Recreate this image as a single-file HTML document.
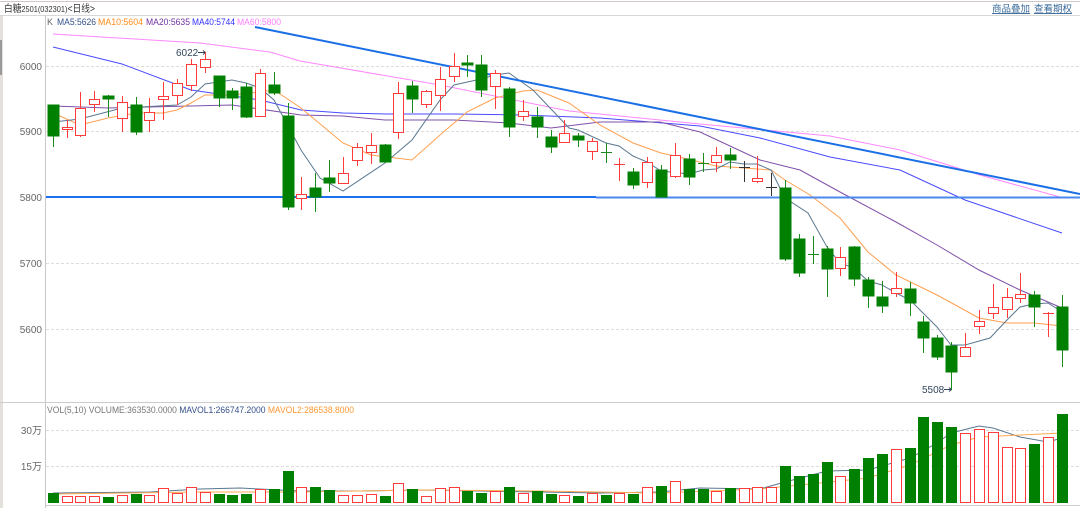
<!DOCTYPE html>
<html><head><meta charset="utf-8"><style>
html,body{margin:0;padding:0;background:#fff;}
body{width:1080px;height:508px;overflow:hidden;position:relative;font-family:"Liberation Sans","Noto Sans CJK SC",sans-serif;}
svg{position:absolute;left:0;top:0;}
.r line,.r rect{stroke:#ff3b3b;}
.r rect{fill:#fff;}
.g line{stroke:#1a8a1a;}
.g rect{fill:#008000;stroke:#008000;}
.k line{stroke:#333;}
</style></head><body>
<svg width="1080" height="508" viewBox="0 0 1080 508" shape-rendering="crispEdges">
<rect x="0" y="0" width="1080" height="508" fill="#fff"/>
<line x1="0" y1="1.5" x2="1080" y2="1.5" stroke="#d0c8c8"/>
<line x1="0" y1="15.5" x2="1080" y2="15.5" stroke="#d8d8d8"/>
<rect x="0" y="16" width="3" height="492" fill="#e4e0dc"/>
<rect x="0" y="40" width="2" height="35" fill="#999"/>
<line x1="45.5" y1="16" x2="45.5" y2="508" stroke="#c8c8c8"/>
<line x1="0" y1="402.5" x2="1080" y2="402.5" stroke="#cccccc"/>
<line x1="46" y1="505.5" x2="1080" y2="505.5" stroke="#cccccc"/>
<g stroke="#dddddd" stroke-dasharray="3,2">
<line x1="46" y1="66.5" x2="1080" y2="66.5"/>
<line x1="46" y1="131.5" x2="1080" y2="131.5"/>
<line x1="46" y1="263.5" x2="1080" y2="263.5"/>
<line x1="46" y1="329.5" x2="1080" y2="329.5"/>
<line x1="46" y1="430.5" x2="1080" y2="430.5"/>
<line x1="46" y1="466.5" x2="1080" y2="466.5"/>
</g>
<g font-family="Liberation Sans, Noto Sans CJK SC, sans-serif" shape-rendering="auto">
<text x="4" y="12" font-size="10" fill="#333" textLength="91" lengthAdjust="spacingAndGlyphs">白糖<tspan font-size="8.5">2501(032301)</tspan>&lt;日线&gt;</text>
<text x="992" y="12" font-size="9.5" fill="#3a6a9a" text-decoration="underline">商品叠加</text>
<text x="1034" y="12" font-size="9.5" fill="#3a6a9a" text-decoration="underline">查看期权</text>
<text x="47" y="25" font-size="9" fill="#666">K</text>
<text x="57" y="25" font-size="9" fill="#33508a" textLength="39" lengthAdjust="spacingAndGlyphs">MA5:5626</text>
<text x="98" y="25" font-size="9" fill="#ff8c1a" textLength="45" lengthAdjust="spacingAndGlyphs">MA10:5604</text>
<text x="146" y="25" font-size="9" fill="#7030a0" textLength="44" lengthAdjust="spacingAndGlyphs">MA20:5635</text>
<text x="192" y="25" font-size="9" fill="#3030ff" textLength="43" lengthAdjust="spacingAndGlyphs">MA40:5744</text>
<text x="237" y="25" font-size="9" fill="#ff80ff" textLength="44" lengthAdjust="spacingAndGlyphs">MA60:5800</text>
<g font-size="10" fill="#666" text-anchor="end">
<text x="42" y="70">6000</text><text x="42" y="135">5900</text><text x="42" y="201">5800</text><text x="42" y="267">5700</text><text x="42" y="333">5600</text>
<text x="42" y="434">30万</text><text x="42" y="470">15万</text>
</g>
<text x="47" y="413" font-size="9" fill="#777" textLength="307" lengthAdjust="spacingAndGlyphs">VOL(5,10) VOLUME:363530.0000 <tspan fill="#33508a">MAVOL1:266747.2000</tspan> <tspan fill="#ff9933">MAVOL2:286538.8000</tspan></text>
<text x="176" y="56" font-size="10" fill="#33465a">6022</text>
<text x="922" y="393" font-size="10" fill="#33465a">5508</text>
</g>
<g stroke="#33465a" fill="none" shape-rendering="auto">
<line x1="198" y1="52.5" x2="205" y2="52.5"/><polyline points="203,50.5 205.5,52.5 203,54.5"/>
<line x1="944" y1="389.5" x2="951" y2="389.5"/><polyline points="949,387.5 951.5,389.5 949,391.5"/>
</g>
<g fill="none" stroke-width="1" shape-rendering="auto">
<polyline stroke="#ff88ff" points="53,34 200,43 270,52 300,61 440,85 569,111 700,124 830,136 900,150 980,175 1060,197"/>
<polyline stroke="#4a4aff" points="53,47 122,64 191,90 260,100 301,110 343,113 385,114 454,114 523,115 600,118 700,126 760,138 830,157 900,170 965,200 1062,233"/>
<polyline stroke="#8050a8" points="53,106 108,108 232,105 301,115 343,116 385,120 454,120 509,123 551,128 600,122 660,122 700,132 760,160 800,170 840,192 896,222 937,245 979,270 1020,290 1062,308"/>
<polyline stroke="#ffa050" points="53,113 80,125 108,118 136,113 163,113 177,110 191,103 205,95 232,95 260,92 274,90 301,108 343,143 371,155 412,160 440,135 467,112 495,98 523,91 537,90 569,103 600,125 633,143 661,153 675,156 716,166 771,170 785,180 810,195 840,218 868,252 896,275 937,295 979,318 1007,323 1034,323 1062,326"/>
<polyline stroke="#5a7890" points="53,122 80,119 122,108 177,105 191,97 205,84 232,80 246,83 260,88 274,100 301,150 320,178 343,191 385,163 412,140 440,100 454,85 481,79 495,75 509,73 533,90 569,128 578,130 606,143 619,146 633,156 647,162 661,171 689,174 703,170 716,169 730,162 744,164 757,164 771,170 785,198 808,213 827,247 840,263 854,268 868,281 882,285 896,293 910,300 923,313 937,327 951,345 965,345 990,338 1007,320 1020,307 1034,304 1048,303 1062,312"/>
<line x1="255" y1="27" x2="1080" y2="194" stroke="#1a6fe6" stroke-width="2"/>
<line x1="46" y1="197" x2="596" y2="197" stroke="#1a70f0" stroke-width="2"/>
<line x1="596" y1="197.5" x2="1080" y2="197.5" stroke="#4a8af0" stroke-width="2"/>
<polyline stroke="#5a7890" points="53,493 150,492 200,489 240,488 300,491 360,491 420,490 480,491 540,492 600,493 660,492 700,488 760,489 785,482 827,471 868,470 896,462 910,458 937,443 951,433 979,426 993,428 1020,437 1048,442 1062,438"/>
<polyline stroke="#ffa850" points="53,494 200,492 300,492 420,490 540,491 660,493 760,489 810,484 868,478 910,465 951,445 979,437 1000,436 1062,433"/>
</g>
<g class="g">
<line x1="53.5" y1="105" x2="53.5" y2="147"/><rect x="48" y="105" width="11" height="31"/>
<line x1="108.5" y1="95" x2="108.5" y2="117"/><rect x="103" y="96" width="11" height="3"/>
<line x1="136.5" y1="97" x2="136.5" y2="135"/><rect x="131" y="105" width="11" height="27"/>
<line x1="219.5" y1="76" x2="219.5" y2="107"/><rect x="214" y="76" width="11" height="22"/>
<line x1="232.5" y1="88" x2="232.5" y2="110"/><rect x="227" y="91" width="11" height="7"/>
<line x1="246.5" y1="83" x2="246.5" y2="118"/><rect x="241" y="87" width="11" height="30"/>
<line x1="274.5" y1="72" x2="274.5" y2="95"/><rect x="269" y="85" width="11" height="8"/>
<line x1="288.5" y1="103" x2="288.5" y2="210"/><rect x="283" y="116" width="11" height="91"/>
<line x1="315.5" y1="173" x2="315.5" y2="212"/><rect x="310" y="188" width="11" height="9"/>
<line x1="329.5" y1="160" x2="329.5" y2="192"/><rect x="324" y="178" width="11" height="5"/>
<line x1="385.5" y1="144" x2="385.5" y2="163"/><rect x="380" y="145" width="11" height="17"/>
<line x1="412.5" y1="81" x2="412.5" y2="113"/><rect x="407" y="86" width="11" height="13"/>
<line x1="467.5" y1="55" x2="467.5" y2="77"/><rect x="462" y="63" width="11" height="2"/>
<line x1="481.5" y1="55" x2="481.5" y2="97"/><rect x="476" y="65" width="11" height="25"/>
<line x1="509.5" y1="87" x2="509.5" y2="137"/><rect x="504" y="89" width="11" height="38"/>
<line x1="537.5" y1="107" x2="537.5" y2="138"/><rect x="532" y="117" width="11" height="10"/>
<line x1="551.5" y1="130" x2="551.5" y2="153"/><rect x="546" y="137" width="11" height="10"/>
<line x1="578.5" y1="133" x2="578.5" y2="147"/><rect x="573" y="136" width="11" height="4"/>
<line x1="606.5" y1="143" x2="606.5" y2="163"/><line x1="601" y1="152.5" x2="612" y2="152.5"/>
<line x1="633.5" y1="168" x2="633.5" y2="189"/><rect x="628" y="172" width="11" height="13"/>
<line x1="661.5" y1="165" x2="661.5" y2="197"/><rect x="656" y="170" width="11" height="27"/>
<line x1="689.5" y1="154" x2="689.5" y2="185"/><rect x="684" y="159" width="11" height="18"/>
<line x1="703.5" y1="153" x2="703.5" y2="172"/><line x1="698" y1="163.5" x2="709" y2="163.5"/>
<line x1="730.5" y1="148" x2="730.5" y2="169"/><rect x="725" y="155" width="11" height="5"/>
<line x1="785.5" y1="180" x2="785.5" y2="261"/><rect x="780" y="188" width="11" height="71"/>
<line x1="799.5" y1="234" x2="799.5" y2="277"/><rect x="794" y="239" width="11" height="34"/>
<line x1="813.5" y1="236" x2="813.5" y2="264"/><line x1="808" y1="254.5" x2="819" y2="254.5"/>
<line x1="827.5" y1="246" x2="827.5" y2="297"/><rect x="822" y="249" width="11" height="20"/>
<line x1="854.5" y1="246" x2="854.5" y2="286"/><rect x="849" y="247" width="11" height="32"/>
<line x1="868.5" y1="277" x2="868.5" y2="308"/><rect x="863" y="280" width="11" height="16"/>
<line x1="882.5" y1="281" x2="882.5" y2="313"/><rect x="877" y="297" width="11" height="9"/>
<line x1="910.5" y1="282" x2="910.5" y2="316"/><rect x="905" y="289" width="11" height="14"/>
<line x1="923.5" y1="316" x2="923.5" y2="353"/><rect x="918" y="322" width="11" height="16"/>
<line x1="937.5" y1="335" x2="937.5" y2="360"/><rect x="932" y="338" width="11" height="19"/>
<line x1="951.5" y1="342" x2="951.5" y2="390"/><rect x="946" y="346" width="11" height="26"/>
<line x1="1034.5" y1="291" x2="1034.5" y2="327"/><rect x="1029" y="295" width="11" height="12"/>
<line x1="1062.5" y1="295" x2="1062.5" y2="367"/><rect x="1057" y="307" width="11" height="43"/>
</g>
<g class="r">
<line x1="67.5" y1="120" x2="67.5" y2="138"/><rect x="62.5" y="127.5" width="10" height="2"/>
<line x1="80.5" y1="92" x2="80.5" y2="137"/><rect x="75.5" y="108.5" width="10" height="27"/>
<line x1="94.5" y1="91" x2="94.5" y2="112"/><rect x="89.5" y="99.5" width="10" height="5"/>
<line x1="122.5" y1="96" x2="122.5" y2="132"/><rect x="117.5" y="102.5" width="10" height="16"/>
<line x1="149.5" y1="98" x2="149.5" y2="132"/><rect x="144.5" y="112.5" width="10" height="8"/>
<line x1="163.5" y1="82" x2="163.5" y2="120"/><rect x="158.5" y="96.5" width="10" height="3"/>
<line x1="177.5" y1="79" x2="177.5" y2="105"/><rect x="172.5" y="83.5" width="10" height="12"/>
<line x1="191.5" y1="59" x2="191.5" y2="91"/><rect x="186.5" y="64.5" width="10" height="21"/>
<line x1="205.5" y1="52" x2="205.5" y2="73"/><rect x="200.5" y="59.5" width="10" height="8"/>
<line x1="260.5" y1="69" x2="260.5" y2="117"/><rect x="255.5" y="73.5" width="10" height="43"/>
<line x1="301.5" y1="177" x2="301.5" y2="210"/><rect x="296.5" y="194.5" width="10" height="4"/>
<line x1="343.5" y1="157" x2="343.5" y2="183"/><rect x="338.5" y="173.5" width="10" height="10"/>
<line x1="357.5" y1="143" x2="357.5" y2="166"/><rect x="352.5" y="147.5" width="10" height="13"/>
<line x1="371.5" y1="133" x2="371.5" y2="164"/><rect x="366.5" y="145.5" width="10" height="7"/>
<line x1="398.5" y1="82" x2="398.5" y2="139"/><rect x="393.5" y="93.5" width="10" height="39"/>
<line x1="426.5" y1="90" x2="426.5" y2="108"/><rect x="421.5" y="91.5" width="10" height="13"/>
<line x1="440.5" y1="67" x2="440.5" y2="111"/><rect x="435.5" y="79.5" width="10" height="16"/>
<line x1="454.5" y1="53" x2="454.5" y2="82"/><rect x="449.5" y="66.5" width="10" height="10"/>
<line x1="495.5" y1="70" x2="495.5" y2="109"/><rect x="490.5" y="73.5" width="10" height="13"/>
<line x1="523.5" y1="100" x2="523.5" y2="121"/><rect x="518.5" y="111.5" width="10" height="5"/>
<line x1="564.5" y1="120" x2="564.5" y2="143"/><rect x="559.5" y="133.5" width="10" height="9"/>
<line x1="592.5" y1="138" x2="592.5" y2="160"/><rect x="587.5" y="141.5" width="10" height="10"/>
<line x1="619.5" y1="158" x2="619.5" y2="181"/><line x1="614" y1="164.5" x2="625" y2="164.5"/>
<line x1="647.5" y1="157" x2="647.5" y2="188"/><rect x="642.5" y="162.5" width="10" height="20"/>
<line x1="675.5" y1="143" x2="675.5" y2="178"/><rect x="670.5" y="155.5" width="10" height="21"/>
<line x1="716.5" y1="147" x2="716.5" y2="172"/><rect x="711.5" y="155.5" width="10" height="7"/>
<line x1="757.5" y1="156" x2="757.5" y2="183"/><rect x="752.5" y="178.5" width="10" height="3"/>
<line x1="840.5" y1="247" x2="840.5" y2="276"/><rect x="835.5" y="257.5" width="10" height="11"/>
<line x1="896.5" y1="272" x2="896.5" y2="297"/><rect x="891.5" y="288.5" width="10" height="5"/>
<line x1="965.5" y1="333" x2="965.5" y2="357"/><rect x="960.5" y="347.5" width="10" height="9"/>
<line x1="979.5" y1="310" x2="979.5" y2="334"/><rect x="974.5" y="321.5" width="10" height="5"/>
<line x1="993.5" y1="284" x2="993.5" y2="319"/><rect x="988.5" y="307.5" width="10" height="6"/>
<line x1="1007.5" y1="288" x2="1007.5" y2="318"/><rect x="1002.5" y="297.5" width="10" height="12"/>
<line x1="1020.5" y1="273" x2="1020.5" y2="303"/><rect x="1015.5" y="294.5" width="10" height="4"/>
<line x1="1048.5" y1="312" x2="1048.5" y2="337"/><line x1="1043" y1="313.5" x2="1054" y2="313.5"/>
</g>
<g class="k">
<line x1="744.5" y1="161" x2="744.5" y2="182"/><line x1="739" y1="167.5" x2="750" y2="167.5"/>
<line x1="771.5" y1="173" x2="771.5" y2="196"/><line x1="766" y1="187.5" x2="777" y2="187.5"/>
</g>
<g fill="#008000">
<rect x="48" y="493" width="11" height="10"/><rect x="103" y="497" width="11" height="6"/><rect x="131" y="494" width="11" height="9"/>
<rect x="214" y="494" width="11" height="9"/><rect x="227" y="495" width="11" height="8"/><rect x="241" y="494" width="11" height="9"/>
<rect x="269" y="489" width="11" height="14"/><rect x="283" y="471" width="11" height="32"/><rect x="310" y="487" width="11" height="16"/>
<rect x="324" y="490" width="11" height="13"/><rect x="380" y="496" width="11" height="7"/><rect x="407" y="489" width="11" height="14"/>
<rect x="462" y="491" width="11" height="12"/><rect x="476" y="493" width="11" height="10"/><rect x="504" y="487" width="11" height="16"/>
<rect x="532" y="491" width="11" height="12"/><rect x="546" y="494" width="11" height="9"/><rect x="573" y="496" width="11" height="7"/>
<rect x="601" y="495" width="11" height="8"/><rect x="628" y="494" width="11" height="9"/><rect x="656" y="486" width="11" height="17"/>
<rect x="684" y="489" width="11" height="14"/><rect x="698" y="489" width="11" height="14"/><rect x="725" y="488" width="11" height="15"/>
<rect x="780" y="466" width="11" height="37"/><rect x="794" y="476" width="11" height="27"/><rect x="808" y="474" width="11" height="29"/>
<rect x="822" y="462" width="11" height="41"/><rect x="849" y="469" width="11" height="34"/><rect x="863" y="458" width="11" height="45"/>
<rect x="877" y="454" width="11" height="49"/><rect x="905" y="448" width="11" height="55"/><rect x="918" y="417" width="11" height="86"/>
<rect x="932" y="422" width="11" height="81"/><rect x="946" y="427" width="11" height="76"/><rect x="1029" y="444" width="11" height="59"/>
<rect x="1057" y="414" width="11" height="89"/>
</g>
<g fill="#fff" stroke="#ff3b3b">
<rect x="62.5" y="496.5" width="10" height="6"/><rect x="75.5" y="496.5" width="10" height="6"/><rect x="89.5" y="496.5" width="10" height="6"/>
<rect x="117.5" y="495.5" width="10" height="7"/><rect x="144.5" y="495.5" width="10" height="7"/><rect x="158.5" y="488.5" width="10" height="14"/>
<rect x="172.5" y="493.5" width="10" height="9"/><rect x="186.5" y="487.5" width="10" height="15"/><rect x="200.5" y="492.5" width="10" height="10"/>
<rect x="255.5" y="489.5" width="10" height="13"/><rect x="296.5" y="487.5" width="10" height="15"/><rect x="338.5" y="495.5" width="10" height="7"/>
<rect x="352.5" y="495.5" width="10" height="7"/><rect x="366.5" y="494.5" width="10" height="8"/><rect x="393.5" y="483.5" width="10" height="19"/>
<rect x="421.5" y="496.5" width="10" height="6"/><rect x="435.5" y="488.5" width="10" height="14"/><rect x="449.5" y="487.5" width="10" height="15"/>
<rect x="490.5" y="491.5" width="10" height="11"/><rect x="518.5" y="493.5" width="10" height="9"/><rect x="559.5" y="495.5" width="10" height="7"/>
<rect x="587.5" y="493.5" width="10" height="9"/><rect x="614.5" y="493.5" width="10" height="9"/><rect x="642.5" y="487.5" width="10" height="15"/>
<rect x="670.5" y="481.5" width="10" height="21"/><rect x="711.5" y="491.5" width="10" height="11"/><rect x="739.5" y="488.5" width="10" height="14"/>
<rect x="752.5" y="487.5" width="10" height="15"/><rect x="766.5" y="487.5" width="10" height="15"/><rect x="835.5" y="476.5" width="10" height="26"/>
<rect x="891.5" y="449.5" width="10" height="53"/><rect x="960.5" y="433.5" width="10" height="69"/><rect x="974.5" y="429.5" width="10" height="73"/>
<rect x="988.5" y="432.5" width="10" height="70"/><rect x="1002.5" y="447.5" width="10" height="55"/><rect x="1015.5" y="448.5" width="10" height="54"/>
<rect x="1043.5" y="437.5" width="10" height="65"/>
</g>
</svg>
</body></html>
